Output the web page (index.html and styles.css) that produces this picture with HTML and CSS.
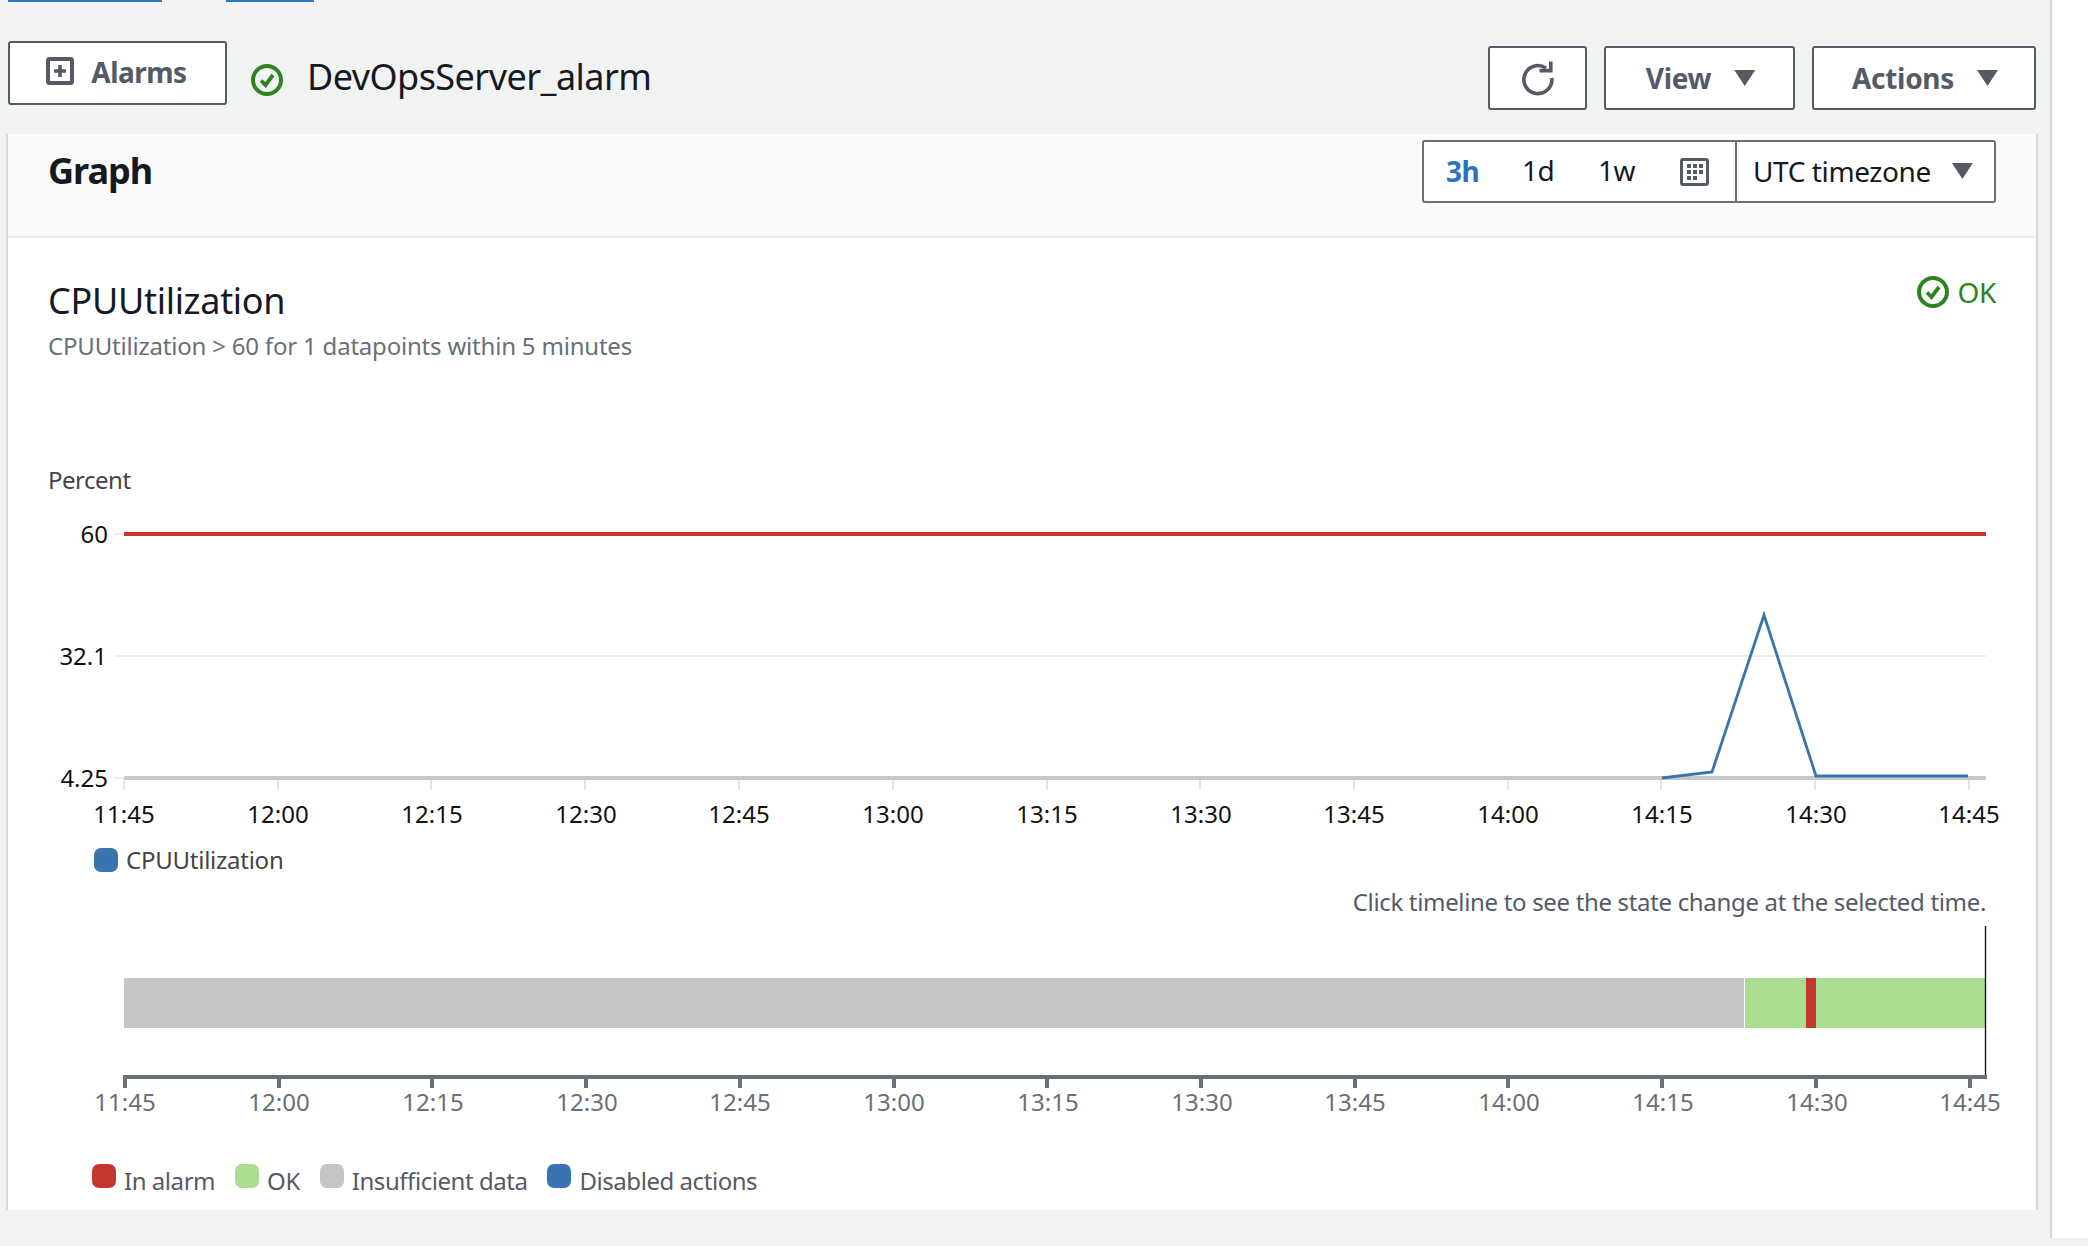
FILE: index.html
```html
<!DOCTYPE html>
<html lang="en">
<head>
<meta charset="utf-8">
<title>DevOpsServer_alarm</title>
<link rel="stylesheet" href="styles.css">
</head>
<body>
<div class="shell">
  <main class="main">
    <div class="crumbs"><span class="crumb crumb-a"></span><span class="crumb crumb-b"></span></div>
    <div class="toolbar">
      <div class="title-group">
        <button class="btn btn-alarms">
          <svg class="ico-plus" width="28" height="28" viewBox="0 0 28 28"><rect x="2" y="2" width="24" height="24" rx="1.5" fill="none" stroke="#545b64" stroke-width="4"/><path d="M14 8v12M8 14h12" stroke="#545b64" stroke-width="3.6"/></svg>
          <span>Alarms</span>
        </button>
        <svg class="ico-status" width="32" height="32" viewBox="0 0 32 32"><circle cx="16" cy="16" r="14" fill="none" stroke="#2f8220" stroke-width="4"/><path d="M10 16.5l4.5 4.5 7.5-10" fill="none" stroke="#2f8220" stroke-width="3.8"/></svg>
        <h1 class="alarm-name">DevOpsServer_alarm</h1>
      </div>
      <div class="actions">
        <button class="btn btn-refresh" aria-label="Refresh">
          <svg width="36" height="36" viewBox="0 0 36 36"><path d="M26 8.2A14 14 0 1 0 31.8 18" fill="none" stroke="#545b64" stroke-width="3.6"/><path d="M19.5 10.6h11.3V1.4" fill="none" stroke="#545b64" stroke-width="3.6"/></svg>
        </button>
        <button class="btn btn-view"><span>View</span><i class="caret"></i></button>
        <button class="btn btn-actions"><span>Actions</span><i class="caret"></i></button>
      </div>
    </div>

    <section class="panel">
      <header class="panel-head">
        <h2 class="panel-title">Graph</h2>
        <div class="range">
          <div class="range-times">
            <span class="range-item range-on r3h">3h</span>
            <span class="range-item r1d">1d</span>
            <span class="range-item r1w">1w</span>
            <svg class="ico-cal" width="29" height="28" viewBox="0 0 29 28"><rect x="1.5" y="1.5" width="26" height="25" rx="1.5" fill="none" stroke="#545b64" stroke-width="3"/><path d="M7 6h4v4H7zM13 6h4v4h-4zM19 6h4v4h-4zM7 12h4v4H7zM13 12h4v4h-4zM19 12h4v4h-4zM7 18h4v4H7zM13 18h4v4h-4z" fill="#545b64"/></svg>
          </div>
          <div class="range-zone"><span>UTC timezone</span><i class="caret"></i></div>
        </div>
      </header>
      <div class="panel-body">
        <div class="chart-head">
          <h3 class="chart-title">CPUUtilization</h3>
          <div class="state">
            <svg width="32" height="32" viewBox="0 0 32 32"><circle cx="16" cy="16" r="14" fill="none" stroke="#2f8220" stroke-width="4"/><path d="M10 16.5l4.5 4.5 7.5-10" fill="none" stroke="#2f8220" stroke-width="3.8"/></svg>
            <span>OK</span>
          </div>
        </div>
        <p class="chart-sub">CPUUtilization &gt; 60 for 1 datapoints within 5 minutes</p>

        <svg class="plot plot-main" width="2028" height="385" viewBox="8 455 2028 385">
          <text class="lbl-axis" x="48" y="489">Percent</text>
          <path class="grid" d="M114 534h10M114 656h1872M114 778h10"/>
          <path class="vtick" d="M124 778v12M278 778v12M431 778v12M585 778v12M739 778v12M893 778v12M1047 778v12M1200 778v12M1354 778v12M1508 778v12M1661 778v12M1815 778v12M1969 778v12"/>
          <rect x="124" y="776" width="1862" height="4" fill="#c7c7c7"/>
          <rect x="124" y="532" width="1862" height="4" fill="#c5362f"/>
          <polyline points="1662,778 1712,772 1764,615 1816,776 1968,776" fill="none" stroke="#3a74b0" stroke-width="2.8"/>
          <g class="tick-y">
            <text x="108" y="543">60</text>
            <text x="107" y="665">32.1</text>
            <text x="108" y="787">4.25</text>
          </g>
          <g class="tick-x">
            <text x="124" y="823">11:45</text><text x="278" y="823">12:00</text><text x="432" y="823">12:15</text><text x="586" y="823">12:30</text><text x="739" y="823">12:45</text><text x="893" y="823">13:00</text><text x="1047" y="823">13:15</text><text x="1201" y="823">13:30</text><text x="1354" y="823">13:45</text><text x="1508" y="823">14:00</text><text x="1662" y="823">14:15</text><text x="1816" y="823">14:30</text><text x="1969" y="823">14:45</text>
          </g>
        </svg>

        <div class="legend-top"><i class="sw sw-blue"></i><span>CPUUtilization</span></div>
        <p class="note">Click timeline to see the state change at the selected time.</p>

        <svg class="plot plot-time" width="2028" height="200" viewBox="8 924 2028 200">
          <rect x="124" y="978" width="1620" height="50" fill="#c6c6c6"/>
          <rect x="1745" y="978" width="240" height="50" fill="#aadc92"/>
          <rect x="1806" y="978" width="10" height="50" fill="#c5362f"/>
          <path d="M1985.5 926v149" stroke="#16191f" stroke-width="1.4"/>
          <rect x="124" y="1075" width="1863" height="4" fill="#687078"/>
          <path class="axis-tick" d="M125 1075v13M279 1075v13M432 1075v13M586 1075v13M740 1075v13M894 1075v13M1047 1075v13M1201 1075v13M1355 1075v13M1508 1075v13M1662 1075v13M1816 1075v13M1970 1075v13"/>
          <g class="tick-x tick-x-muted">
            <text x="125" y="1111">11:45</text><text x="279" y="1111">12:00</text><text x="433" y="1111">12:15</text><text x="587" y="1111">12:30</text><text x="740" y="1111">12:45</text><text x="894" y="1111">13:00</text><text x="1048" y="1111">13:15</text><text x="1202" y="1111">13:30</text><text x="1355" y="1111">13:45</text><text x="1509" y="1111">14:00</text><text x="1663" y="1111">14:15</text><text x="1817" y="1111">14:30</text><text x="1970" y="1111">14:45</text>
          </g>
        </svg>

        <div class="legend-bottom">
          <div class="leg"><i class="sw sw-red"></i><span>In alarm</span></div>
          <div class="leg"><i class="sw sw-green"></i><span>OK</span></div>
          <div class="leg"><i class="sw sw-gray"></i><span>Insufficient data</span></div>
          <div class="leg"><i class="sw sw-blue"></i><span>Disabled actions</span></div>
        </div>
      </div>
    </section>
  </main>
  <aside class="rail"></aside>
</div>
</body>
</html>
```
FILE: styles.css
```css
* { box-sizing: border-box; }
html, body { margin: 0; padding: 0; }
body {
  width: 2088px;
  height: 1246px;
  overflow: hidden;
  background: #f1f3f3;
  font-family: "Noto Sans", "Open Sans", sans-serif;
  color: #16191f;
}
h1, h2, h3, p { margin: 0; font-weight: 400; }
.shell { display: flex; height: 1238px; }
.main { width: 2052px; border-right: 2px solid #d5d8d8; display: flex; flex-direction: column; }
.rail { flex: 1; background: #fff; }

.crumbs { height: 2px; padding-left: 8px; display: flex; gap: 64px; }
.crumb { display: block; height: 2px; background: #2f77c4; }
.crumb-a { width: 154px; }
.crumb-b { width: 88px; }

.toolbar { height: 132px; display: flex; justify-content: space-between; padding: 39px 14px 0 8px; }
.title-group { display: flex; align-items: flex-start; }
.btn {
  display: flex; align-items: center; justify-content: center;
  background: #fff; border: 2px solid #545b64; border-radius: 3px;
  font: 700 28px/1 "Noto Sans", sans-serif; color: #545b64; padding: 0; letter-spacing: -0.3px;
}
.btn-alarms { width: 219px; height: 64px; gap: 17px; padding: 0 2px 2px 0; letter-spacing: -0.5px; }
.ico-plus { flex: none; margin-top: -2px; }
.ico-status { margin: 23px 0 0 24px; }
.alarm-name { margin: 11px 0 0 24px; font-size: 36px; line-height: 50px; letter-spacing: -0.55px; }
.actions { display: flex; gap: 17px; padding-top: 5px; }
.btn-refresh { width: 99px; height: 64px; }
.btn-view { width: 191px; height: 64px; gap: 23px; padding-left: 2px; }
.btn-actions { width: 224px; height: 64px; gap: 23px; padding-left: 2px; }
.caret {
  display: block; width: 21px; height: 16px; background: #545b64; flex: none;
  clip-path: polygon(0 0, 100% 0, 50% 100%);
}

.panel { width: 2032px; margin-left: 6px; height: 1076px; background: #fff; border-left: 2px solid #d5d8d8; border-right: 2px solid #d5d8d8; display: flex; flex-direction: column; }
.panel-head { height: 104px; flex: none; background: #fafafa; border-bottom: 2px solid #eaeded; display: flex; justify-content: space-between; align-items: flex-start; padding: 6px 40px 0 40px; }
.panel-title { font-size: 36px; font-weight: 700; line-height: 50px; margin-top: 6px; letter-spacing: -1px; }
.range { display: flex; height: 63px; width: 574px; border: 2px solid #687078; border-radius: 3px; background: #fff; font-size: 28px; letter-spacing: -0.4px; }
.range-times { width: 313px; border-right: 2px solid #687078; position: relative; flex: none; }
.range-item { position: absolute; top: 9px; line-height: 38px; }
.r3h { left: 22px; top: 10px; } .r1d { left: 98px; } .r1w { left: 174px; }
.range-on { color: #2e73b8; font-weight: 700; }
.ico-cal { position: absolute; left: 256px; top: 16px; }
.range-zone { flex: 1; display: flex; align-items: center; gap: 21px; padding-left: 16px; padding-bottom: 1px; }

.panel-body { flex: 1; padding-left: 40px; padding-right: 40px; display: flex; flex-direction: column; }
.chart-head { display: flex; justify-content: space-between; align-items: flex-start; padding-top: 35px; height: 85px; }
.chart-title { font-size: 36px; line-height: 50px; margin-top: 3px; letter-spacing: -0.3px; }
.state { display: flex; align-items: center; gap: 8px; color: #2f8220; font-size: 28px; line-height: 38px; letter-spacing: -0.3px; }
.chart-sub { font-size: 24px; line-height: 34px; color: #687078; margin-top: 6px; letter-spacing: -0.2px; }

.plot { display: block; flex: none; margin-left: -40px; }
.plot-main { margin-top: 92px; }
.lbl-axis { font-size: 24px; fill: #444; letter-spacing: -0.5px; }
.grid { fill: none; stroke: #eeeeee; stroke-width: 2; }
.vtick { fill: none; stroke: #e6e6e6; stroke-width: 2; }
.tick-y text { font-size: 24px; fill: #111; text-anchor: end; }
.tick-x text { font-size: 24px; fill: #111; text-anchor: middle; }
.tick-x-muted text { fill: #687078; }
.axis-tick { fill: none; stroke: #687078; stroke-width: 4; }

.legend-top { display: flex; align-items: center; gap: 8px; font-size: 24px; line-height: 34px; color: #444; margin: 3px 0 0 46px; letter-spacing: -0.25px; }
.note { text-align: right; font-size: 24px; line-height: 34px; color: #545b64; margin: 0 10px 0 0; padding-top: 8px; height: 47px; letter-spacing: -0.33px; }
.sw { display: block; width: 24px; height: 24px; border-radius: 7px; flex: none; }
.sw-blue { background: #3a74b0; }
.sw-red { background: #c5362f; }
.sw-green { background: #aadc92; }
.sw-gray { background: #c6c6c6; }
.legend-bottom { display: flex; gap: 20px; margin: 40px 0 0 44px; font-size: 24px; line-height: 34px; color: #545b64; letter-spacing: -0.45px; }
.leg { display: flex; align-items: flex-start; gap: 8px; }
```
